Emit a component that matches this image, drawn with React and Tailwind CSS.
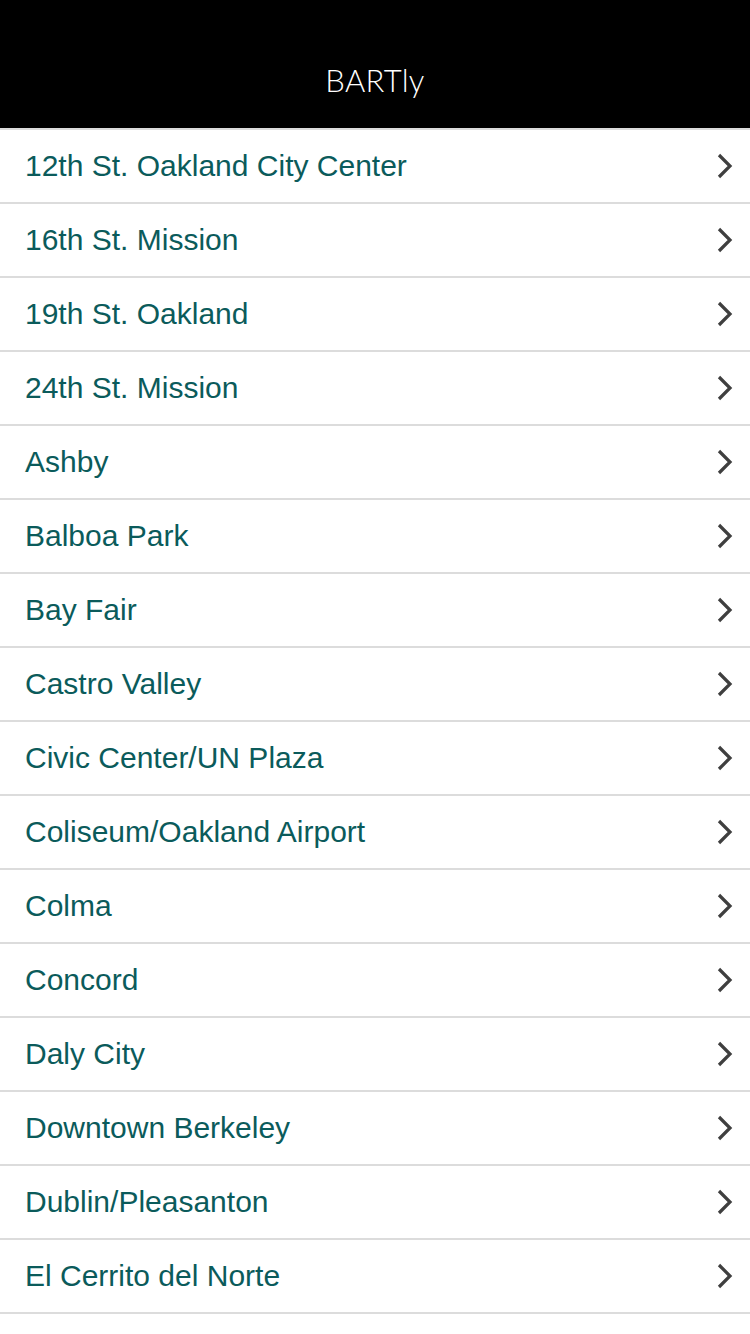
import React from "react";

const stations = [
  "12th St. Oakland City Center",
  "16th St. Mission",
  "19th St. Oakland",
  "24th St. Mission",
  "Ashby",
  "Balboa Park",
  "Bay Fair",
  "Castro Valley",
  "Civic Center/UN Plaza",
  "Coliseum/Oakland Airport",
  "Colma",
  "Concord",
  "Daly City",
  "Downtown Berkeley",
  "Dublin/Pleasanton",
  "El Cerrito del Norte",
];

function Chevron() {
  return (
    <svg width="18" height="26" viewBox="0 0 18 26" className="shrink-0">
      <path d="M3 2 L14 13 L3 24" fill="none" stroke="#3f3f3f" strokeWidth="3.2" strokeLinecap="butt" strokeLinejoin="miter" />
    </svg>
  );
}

export default function App() {
  return (
    <div className="w-[750px] h-[1334px] overflow-hidden bg-white" style={{ fontFamily: '"Liberation Sans", Arial, sans-serif' }}>
      <div className="h-[128px] bg-black flex items-end justify-center pb-[32px]">
        <span className="text-white text-[31px] leading-none font-light tracking-[0.3px]" style={{ fontFamily: 'Lato, "Open Sans", sans-serif' }}>
          BARTly
        </span>
      </div>
      <div className="h-[2px] bg-[#dcdcdc]" />
      <ul>
        {stations.map((s) => (
          <li key={s} className="h-[74px] flex items-center justify-between pl-[25px] pr-[16px] border-b-2 border-[#dcdcdc]">
            <span className="text-[30px] text-[#0b5b5b] leading-none">{s}</span>
            <Chevron />
          </li>
        ))}
      </ul>
    </div>
  );
}
